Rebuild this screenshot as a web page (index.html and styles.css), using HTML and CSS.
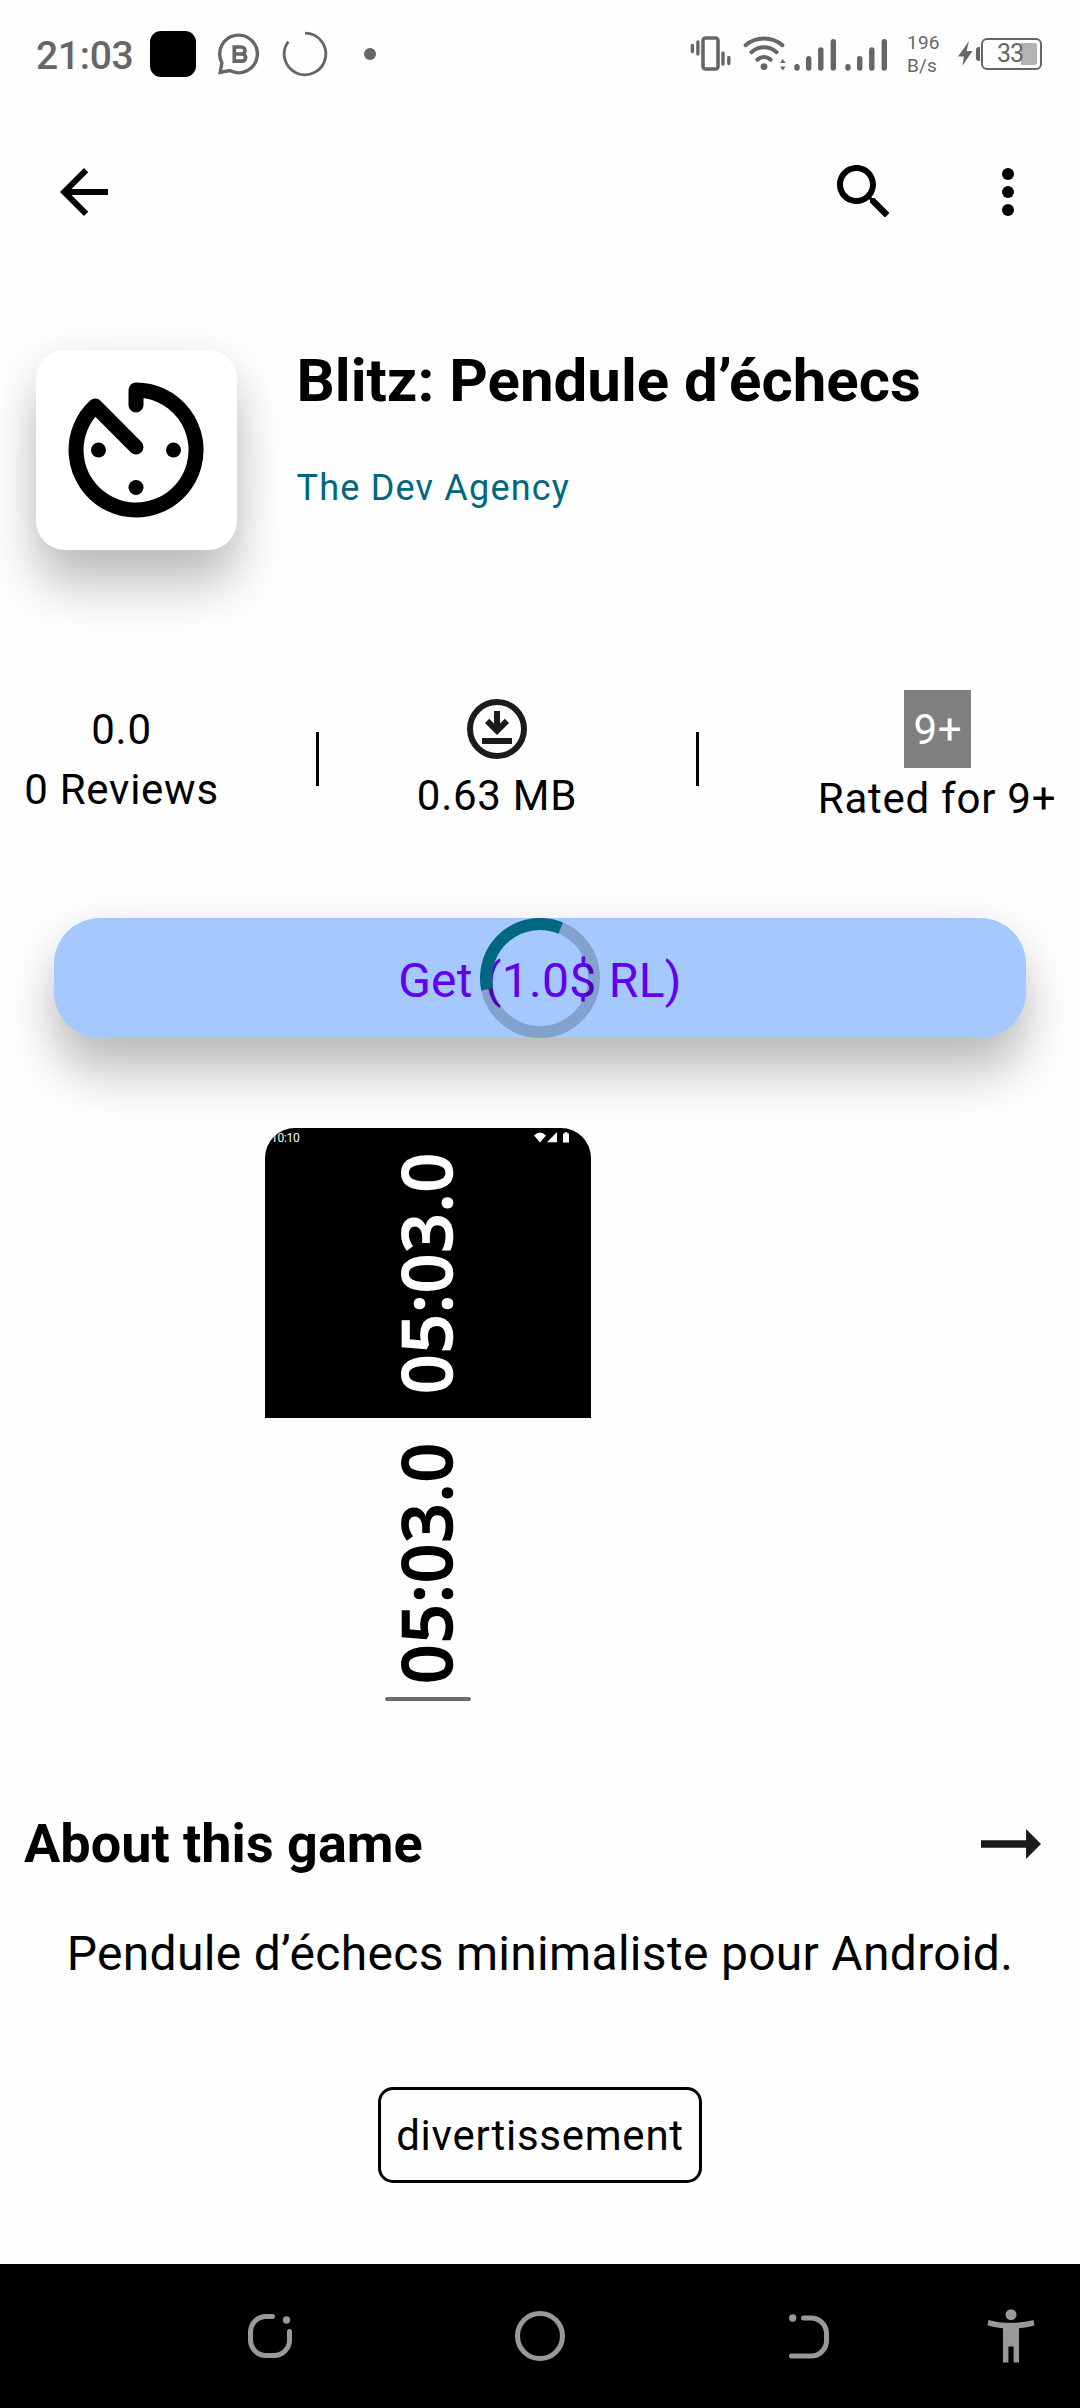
FILE: index.html
```html
<!DOCTYPE html>
<html lang="fr">
<head>
<meta charset="utf-8">
<title>Blitz: Pendule d’échecs</title>
<link rel="stylesheet" href="styles.css">
</head>
<body>
<div class="status-bar">
  <span class="clock">21:03</span>
  <span class="stop-square"></span>
  <svg class="chat-badge" width="44" height="44" viewBox="0 0 44 44" fill="none" stroke="#666" stroke-width="3.4">
    <path d="M4.900 30.700A18.800 18.800 0 1 1 12.800 38.600L3.200 40.300Z"/>
    <path d="M17.300 15H24.500A3.500 3.500 0 0 1 24.500 22H17.300ZM17.300 22H25A3.600 3.600 0 0 1 25 29.200H17.300Z" stroke-width="3.700"/>
  </svg>
  <svg class="loader" width="46" height="46" viewBox="0 0 46 46" fill="none" stroke="#666" stroke-width="2.8">
    <path d="M23 2.200A20.800 20.800 0 1 1 6.300 10.600"/>
  </svg>
  <span class="more-dot"></span>
  <div class="status-right">
    <svg width="42" height="36" viewBox="0 0 42 36" fill="none" stroke="#666" stroke-linecap="round">
      <rect x="13" y="2" width="15" height="31" rx="2.500" stroke-width="3.600"/>
      <path d="M2.400 9.500v6M7.900 6v12M33 17v11M38.800 21.500v6" stroke-width="3.400"/>
    </svg>
    <svg class="wifi" width="44" height="36" viewBox="0 0 44 36" fill="none" stroke="#666" stroke-width="4" stroke-linecap="round">
      <path d="M2.600 9.200C13.500 .2 28.500 .2 39.400 9.200M8.400 16.200C16 9.700 26 9.700 33.600 16.200M14.400 23.600C18.500 20.200 23.500 20.200 27.600 23.600"/>
      <circle cx="21" cy="30.600" r="3.400" fill="#666" stroke="none"/>
      <path d="M37 27l2.800-4 2.800 4zM37 30.500h5.600l-2.800 4z" fill="#666" stroke="none"/>
    </svg>
    <svg class="signal" width="93" height="34" viewBox="0 0 93 34" stroke="#666" stroke-width="5.400" stroke-linecap="round">
      <path d="M3 30.100v-1.400M14.700 30.100V20.700M26.800 30.100V12M39.300 30.100V3.700M54 30.100v-1.400M65.700 30.100V20.700M77.800 30.100V12M90.300 30.100V3.700"/>
    </svg>
    <div class="net-speed"><span>196</span><span>B/s</span></div>
    <svg class="bolt" width="15" height="26" viewBox="0 0 15 26"><path d="M11 0 0 15.500h6L4.300 25 14.500 10H8.500Z" fill="#666"/></svg>
    <span class="battery-nub"></span>
    <span class="battery"><span class="battery-rest"></span><span class="battery-level">33</span></span>
  </div>
</div>

<div class="app-bar">
  <svg width="72" height="72" viewBox="0 0 24 24"><path d="M20 11H7.830l5.590-5.590L12 4l-8 8 8 8 1.410-1.410L7.830 13H20v-2z"/></svg>
  <div class="app-actions">
    <svg width="72" height="72" viewBox="0 0 24 24"><path d="M15.500 14h-.79l-.28-.27C15.410 12.590 16 11.110 16 9.500 16 5.910 13.090 3 9.500 3S3 5.910 3 9.500 5.910 16 9.500 16c1.610 0 3.090-.59 4.230-1.570l.27.28v.79l5 4.990L20.490 19l-4.990-5zm-6 0C7.010 14 5 11.990 5 9.500S7.010 5 9.500 5 14 7.010 14 9.500 11.990 14 9.500 14z"/></svg>
    <svg width="72" height="72" viewBox="0 0 24 24"><circle cx="12" cy="6" r="2"/><circle cx="12" cy="12" r="2"/><circle cx="12" cy="18" r="2"/></svg>
  </div>
</div>

<div class="header">
  <div class="app-icon">
    <svg width="180" height="180" viewBox="0 0 24 24" fill="none" stroke="#000" stroke-width="2" stroke-linecap="round" stroke-linejoin="round">
      <path d="M12 6V4A8 8 0 1 1 6.560 6.140L12 11.600"/>
      <g fill="#000" stroke="none"><circle cx="7" cy="12" r="1"/><circle cx="17" cy="12" r="1"/><circle cx="12" cy="17" r="1"/></g>
    </svg>
  </div>
  <div class="heading">
    <h1 class="title">Blitz: Pendule d’échecs</h1>
    <div class="developer">The Dev Agency</div>
  </div>
</div>

<div class="stats">
  <div class="stat reviews"><span>0.0</span><span>0 Reviews</span></div>
  <span class="divider"></span>
  <div class="stat size">
    <svg width="72" height="72" viewBox="0 0 24 24" fill="#1b1b1b"><circle cx="12" cy="12" r="9" fill="none" stroke="#1b1b1b" stroke-width="2"/><path d="M7 15h10v2H7zM11 6h2v4.200l1.600-1.600L16 10l-4 4-4-4 1.400-1.400 1.600 1.600z"/></svg>
    <span>0.63 MB</span>
  </div>
  <span class="divider second"></span>
  <div class="stat rating"><span class="age">9+</span><span>Rated for 9+</span></div>
</div>

<button class="get">Get (1.0$ RL)
  <svg class="progress" width="120" height="120" viewBox="0 0 120 120" fill="none" stroke-width="12">
    <circle cx="60" cy="60" r="54" stroke="#000" stroke-opacity=".2"/>
    <path d="M7.200 71.200A54 54 0 0 1 80.700 10.100" stroke="#006780"/>
  </svg>
</button>

<div class="preview">
  <div class="half dark">
    <div class="mini-status">
      <span>10:10</span>
      <svg width="36" height="11" viewBox="0 0 36 11" fill="#fff"><path d="M0 3.400Q6-2.600 12 3.400L6 10.500ZM23 0V10.300H13ZM29 1.500h1.500V.3h3v1.200H35v9h-6z"/></svg>
    </div>
    <span class="timer">05:03.0</span>
  </div>
  <div class="half light">
    <span class="timer">05:03.0</span>
    <span class="home-line"></span>
  </div>
</div>

<div class="about">
  <h2 class="about-title">About this game</h2>
  <svg width="90" height="90" viewBox="0 0 24 24" fill="#1b1b1b"><path d="M16.010 11H4v2h12.010v3L20 12l-3.990-4v3z"/></svg>
</div>
<p class="description">Pendule d’échecs minimaliste pour Android.</p>
<div class="tags"><span class="tag">divertissement</span></div>

<div class="nav-bar">
  <svg class="nav-recent" width="48" height="48" viewBox="0 0 48 48" fill="none" stroke="#999" stroke-width="5" stroke-linecap="round">
    <path d="M26.500 4.500H20A15.500 15.500 0 0 0 4.500 20V28A15.500 15.500 0 0 0 20 43.500H28A15.500 15.500 0 0 0 43.500 28V19.500"/>
    <circle cx="40.500" cy="8" r="3.700" fill="#999" stroke="none"/>
  </svg>
  <svg class="nav-home" width="50" height="50" viewBox="0 0 50 50"><circle cx="25" cy="25" r="22.500" fill="none" stroke="#999" stroke-width="5"/></svg>
  <svg class="nav-back" width="42" height="48" viewBox="0 0 42 48" fill="none" stroke="#999" stroke-width="5" stroke-linecap="round">
    <path d="M15.500 6H23A15.500 15.500 0 0 1 38.500 21.500V29.500A15.500 15.500 0 0 1 23 44H3.500"/>
    <circle cx="4.700" cy="6" r="3.700" fill="#999" stroke="none"/>
  </svg>
  <svg class="nav-access" width="48" height="54" viewBox="0 0 48 54" fill="#999">
    <circle cx="24" cy="5.700" r="5.500"/>
    <path d="M1.500 11C15 14.800 33 14.800 46.500 11L47.500 16.500Q40 18.600 32 19.200V53.500H26.600V37.500H21.400V53.500H16V19.200Q8 18.600 .5 16.500Z"/>
  </svg>
</div>
</body>
</html>
```
FILE: styles.css
```css
* { box-sizing: border-box; }
body {
  margin: 0;
  width: 1080px;
  height: 2408px;
  background: #fefefe;
  color: #000;
  font-family: Roboto, sans-serif;
  display: flex;
  flex-direction: column;
}
svg { display: block; flex: none; }

/* system status bar */
.status-bar { height: 108px; display: flex; align-items: center; padding-left: 36px; color: #666; flex: none; }
.clock { font-size: 39px; font-weight: 500; letter-spacing: -.3px; width: 114px; padding-top: 3px; }
.stop-square { width: 46px; height: 46px; border-radius: 11px; background: #000; }
.chat-badge { margin-left: 21px; }
.loader { margin-left: 21px; }
.more-dot { width: 12px; height: 12px; border-radius: 50%; background: #666; margin-left: 36px; }
.status-right { margin-left: auto; padding-right: 38px; display: flex; align-items: center; }
.wifi { margin-left: 11px; margin-top: -1px; }
.signal { margin: 1px 0 0 7px; }
.net-speed { display: flex; flex-direction: column; font-size: 19px; line-height: 22.500px; letter-spacing: .2px; width: 51px; margin: 1px 0 0 20px; }
.bolt { margin-right: 3px; }
.battery-nub { width: 4px; height: 14px; border-radius: 3px 0 0 3px; background: #666; }
.battery { width: 61px; height: 32px; border: 2px solid #666; border-radius: 6px; margin-left: 1px; display: grid; align-items: center; justify-items: center; }
.battery-rest, .battery-level { grid-area: 1 / 1; }
.battery-rest { width: 16px; height: 22px; background: #b3b3b3; border-radius: 0 2px 2px 0; justify-self: end; margin-right: 3px; }
.battery-level { font-size: 25px; line-height: 28px; letter-spacing: -1px; margin-right: 3px; color: #666; }

/* toolbar */
.app-bar { height: 168px; display: flex; align-items: center; justify-content: space-between; padding: 0 36px 0 48px; flex: none; }
.app-actions { display: flex; gap: 72px; }

/* raised surfaces */
.app-icon, .get { box-shadow: 0 36px 50px rgba(0,0,0,.24), 0 0 44px rgba(0,0,0,.06); }

/* app identity */
.header { height: 414px; padding: 70px 36px 0; display: flex; gap: 60px; flex: none; }
.app-icon { width: 200.500px; height: 200px; margin-top: 4px; padding: 10px; border-radius: 29px; background: #fff; }
.title { margin: 0; font-size: 60px; line-height: 70px; font-weight: 700; }
.developer { margin-top: 51px; font-size: 36px; line-height: 42px; letter-spacing: 1.200px; color: #006780; }

/* stats */
.stats { height: 228px; display: flex; align-items: flex-start; padding-left: 24px; flex: none; }
.stat { display: flex; flex-direction: column; align-items: center; font-size: 42px; line-height: 60px; letter-spacing: .75px; white-space: nowrap; }
.reviews { width: 195px; margin-top: 10px; }
.divider { width: 3px; height: 54px; margin-top: 42px; margin-left: 97px; background: #000; }
.size { width: 160px; margin: 3px 0 0 98px; }
.size span { margin-top: 1px; }
.divider.second { margin-left: 119px; }
.rating { width: 238px; margin-left: 119px; }
.age { width: 67px; height: 78px; line-height: 80px; margin-bottom: 1px; padding-left: 10px; background: #808080; color: #fff; }

/* purchase button */
.get { position: relative; width: 972px; height: 120px; margin: 0 54px; padding: 6px 0 0; border: 0; border-radius: 46px; background: #a5c8ff; color: #6200ee; font: 48px/60px Roboto, sans-serif; letter-spacing: .3px; flex: none; }
.progress { position: absolute; left: 426px; top: 0; }

/* game preview */
.preview { position: relative; width: 326px; height: 580px; margin: 90px 0 0 265px; border-radius: 30px; overflow: hidden; flex: none; }
.half { position: relative; height: 290px; padding-right: 6px; display: flex; align-items: center; justify-content: center; }
.dark { background: #000; color: #fff; }
.timer { writing-mode: vertical-rl; transform: rotate(180deg); font: 500 69px/80px "Noto Sans", sans-serif; letter-spacing: 1px; -webkit-text-stroke: 1.600px currentColor; }
.mini-status { position: absolute; inset: 4px 21px auto 6px; display: flex; justify-content: space-between; font-size: 12px; line-height: 13px; }
.mini-status span { letter-spacing: -.3px; }
.home-line { position: absolute; left: 120px; bottom: 7px; width: 86px; height: 4px; border-radius: 2px; background: #6b6b6b; }

/* description */
.about { height: 90px; margin-top: 91px; padding: 0 24px; display: flex; align-items: center; justify-content: space-between; flex: none; }
.about-title { margin: 0; font-size: 54px; line-height: 64px; font-weight: 700; }
.description { margin: 37px 0 0; text-align: center; font-size: 48px; line-height: 56px; letter-spacing: .3px; white-space: nowrap; }
.tags { margin-top: 105px; display: flex; justify-content: center; }
.tag { width: 324px; height: 96px; border: 3px solid #000; border-radius: 15px; text-align: center; font-size: 42px; line-height: 92px; letter-spacing: .75px; }

/* system navigation */
.nav-bar { height: 144px; margin-top: auto; background: #000; display: flex; align-items: center; flex: none; }
.nav-recent { margin-left: 246px; }
.nav-home { margin-left: 221px; }
.nav-back { margin-left: 223px; }
.nav-access { margin-left: 157px; }
```
